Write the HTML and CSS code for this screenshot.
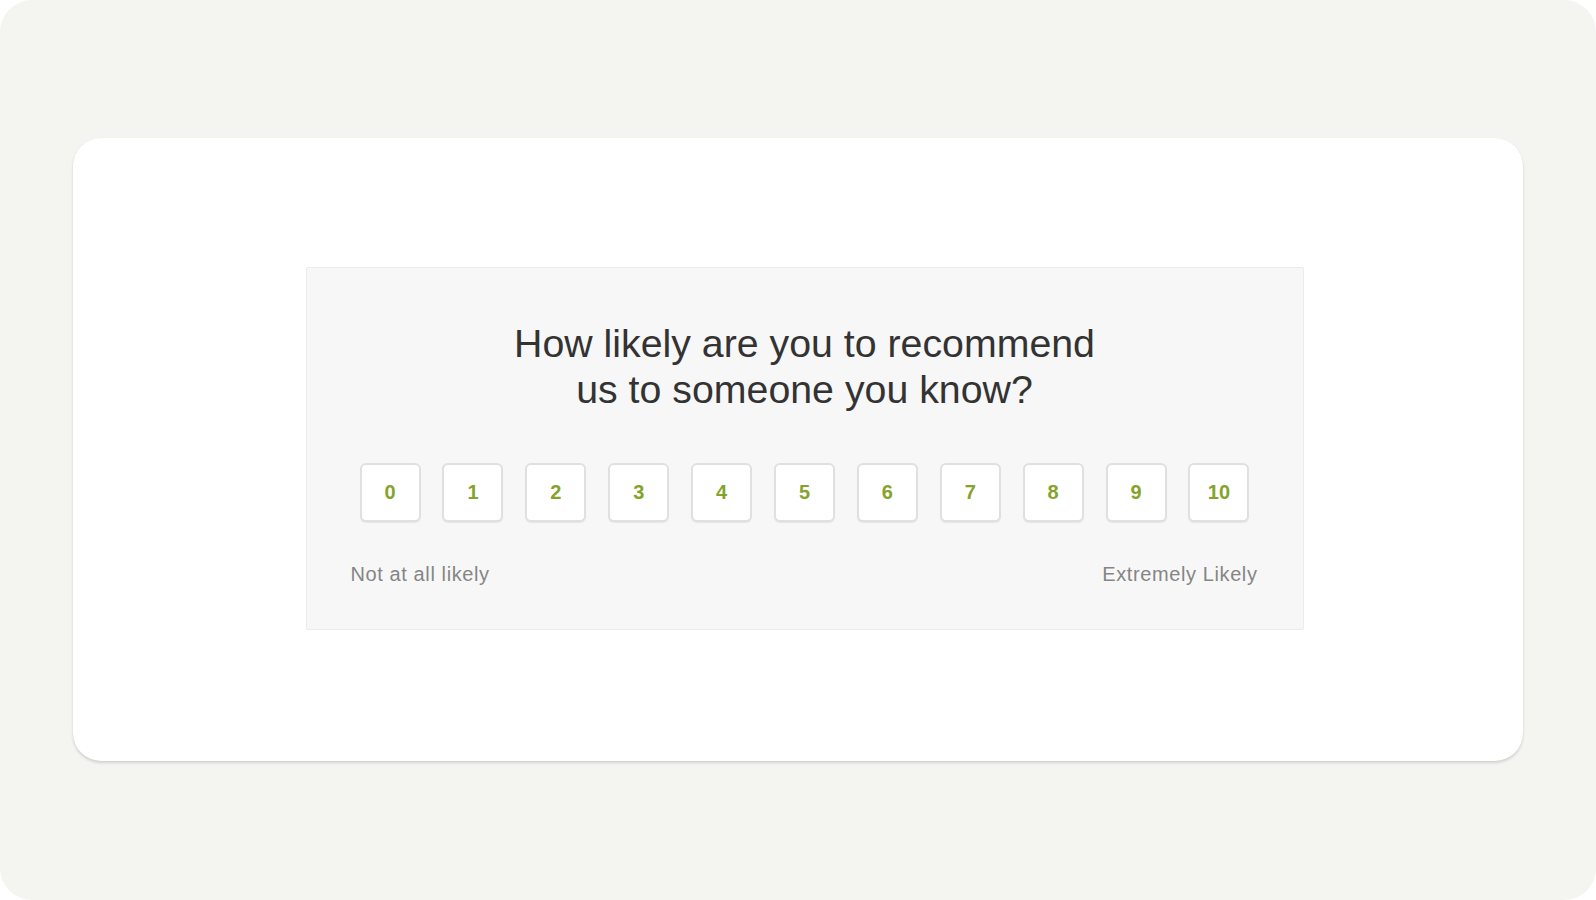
FILE: index.html
```html
<!DOCTYPE html>
<html lang="en">
<head>
<meta charset="utf-8">
<title>NPS Survey</title>
<link rel="stylesheet" href="styles.css">
</head>
<body>
<div class="frame">
  <div class="card">
    <div class="survey">
      <h1 class="question">How likely are you to recommend<br>us to someone you know?</h1>
      <div class="scale">
        <div class="score">0</div>
        <div class="score">1</div>
        <div class="score">2</div>
        <div class="score">3</div>
        <div class="score">4</div>
        <div class="score">5</div>
        <div class="score">6</div>
        <div class="score">7</div>
        <div class="score">8</div>
        <div class="score">9</div>
        <div class="score">10</div>
      </div>
      <div class="labels">
        <span class="label">Not at all likely</span>
        <span class="label">Extremely Likely</span>
      </div>
    </div>
  </div>
</div>
</body>
</html>
```
FILE: styles.css
```css
html, body {
  margin: 0;
  padding: 0;
  background: #ffffff;
}

body {
  width: 1596px;
  height: 900px;
  font-family: "Liberation Sans", Arial, sans-serif;
}

.frame {
  width: 1596px;
  height: 900px;
  box-sizing: border-box;
  background: #f4f4f0;
  border-radius: 32px;
  display: flex;
  align-items: center;
  justify-content: center;
}

.card {
  width: 1450px;
  height: 623px;
  margin-top: -1px;
  background: #ffffff;
  border-radius: 28px;
  box-shadow: 0 2px 3px rgba(0, 0, 0, 0.14), 0 0 1px rgba(0, 0, 0, 0.06);
  display: flex;
  align-items: center;
  justify-content: center;
}

.survey {
  width: 998px;
  height: 363px;
  box-sizing: border-box;
  margin-left: 13px;
  margin-top: -2px;
  background: #f7f7f7;
  border: 1px solid #ebebeb;
  border-radius: 2px;
  display: flex;
  flex-direction: column;
  align-items: center;
  padding-top: 52px;
}

.question {
  margin: 0;
  font-weight: normal;
  font-size: 39.3px;
  line-height: 46px;
  color: #333333;
  text-align: center;
}

.scale {
  display: flex;
  gap: 21.9px;
  margin-top: 51px;
}

.score {
  width: 61px;
  height: 59px;
  box-sizing: border-box;
  background: #ffffff;
  border: 2px solid #e0e0e0;
  border-radius: 6px;
  box-shadow: 0 1px 1px rgba(0, 0, 0, 0.07);
  display: flex;
  align-items: center;
  justify-content: center;
  font-size: 20px;
  font-weight: bold;
  color: #85a32c;
}

.labels {
  align-self: stretch;
  display: flex;
  justify-content: space-between;
  padding: 0 45px 0 44px;
  margin-top: 41px;
}

.label {
  font-size: 20px;
  letter-spacing: 0.6px;
  color: #858585;
}
```
